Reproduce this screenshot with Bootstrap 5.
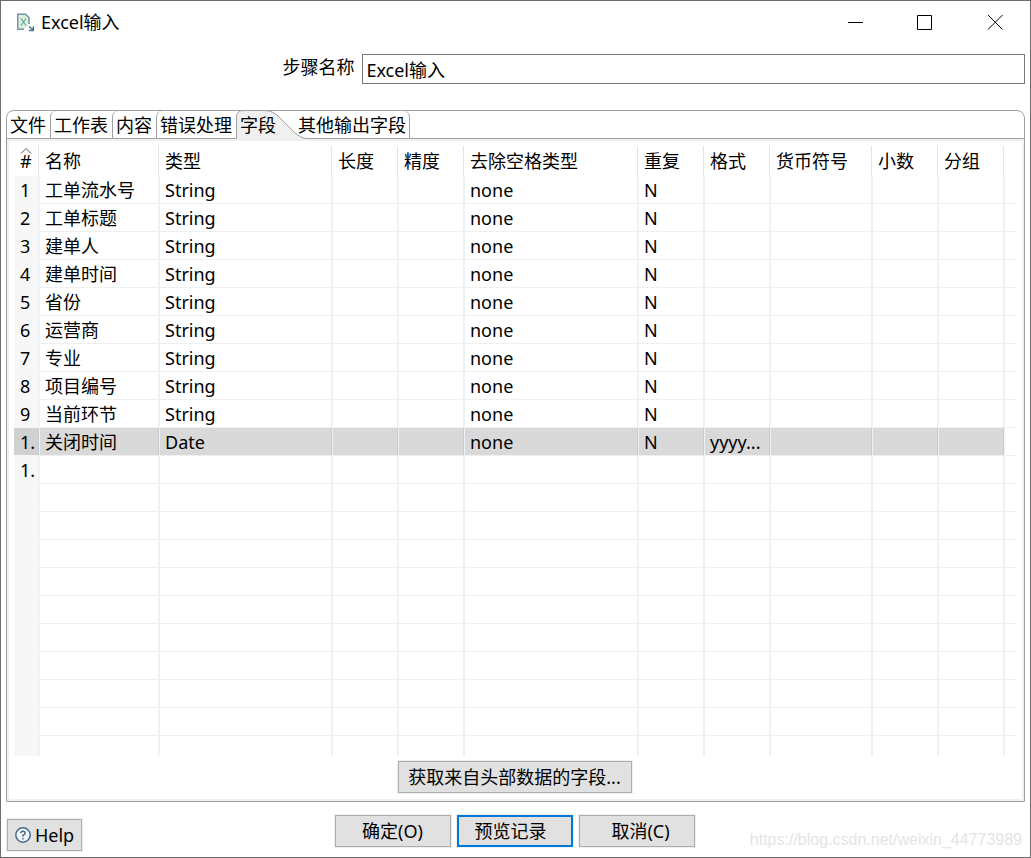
<!DOCTYPE html>
<html lang="zh-CN">
<head>
<meta charset="utf-8">
<meta name="viewport" content="width=device-width, initial-scale=1">
<title>Excel输入</title>
<link rel="stylesheet" href="https://cdn.jsdelivr.net/npm/bootstrap@5.3.0/dist/css/bootstrap.min.css">
<style>
body { font: 18px/28px "Noto Sans", "Noto Sans CJK SC", sans-serif; color: #000; background: #fff; }
.dialog { min-height: 100vh; border: 1px solid #6d6d6d; }
.titlebar { height: 42px; padding-left: 14px; }
.win-btn { width: 70px; height: 42px; border: 0; background: none; padding: 0; }
.step-row { gap: 8px; padding: 11px 5px 0 0; margin-bottom: 26px; }
.step-label { width: calc(35% - 5px); line-height: 26px; }
.step-input { height: 30px; border: 1px solid #7a7a7a; padding: 0 3px; color: #000; font-size: 18px; line-height: 26px; }
.pane { margin: 0 5px; border: 1px solid #a0a0a0; border-radius: 8px 8px 0 0; }
.tabs { height: 28px; border-bottom: 1px solid #a0a0a0; }
.tab-btn { height: 27px; line-height: 25px; border: 0; background: none; padding: 2px 4px 0 3px; color: #000; white-space: nowrap; }
.tab-btn + .tab-btn { border-left: 1px solid #a0a0a0; border-top-left-radius: 6px; }
.tab-btn + .tab-btn.tab-active { border-left: 0; width: 60px; text-align: left; padding-left: 4px; }
.tab-btn + .tab-btn.tab-last { border-left: 0; border-right: 1px solid #a0a0a0; border-radius: 0 6px 0 0; padding: 2px 3px 0 2px; }
.tab-shape { left: 0; top: -1px; pointer-events: none; }
.pane-body { border: 2px solid #f0f0f0; padding: 5px 5px 6px; }
.grid-table { table-layout: fixed; width: 100%; border-collapse: separate; border-spacing: 0; }
.grid-table th, .grid-table td { height: 28px; line-height: 27px; padding: 0 0 0 5px; white-space: nowrap; overflow: hidden; border: 0 solid #edf1f8; border-right-width: 2px; }
.grid-table th { height: 30px; line-height: 30px; font-weight: 400; border-right: 1px solid #fff; box-shadow: inset -1px 0 #e5e5e5; }
.grid-table td { border-bottom: 1px solid #efefef; line-height: 25px; padding-top: 2px; }
.grid-table td:first-child { background: #f7f7f7; border-bottom-color: #f7f7f7; padding-left: 6px; }
.grid-table th:first-child { padding-left: 6px; }
.grid-table th:last-child, .grid-table td:last-child { border-right: 0; box-shadow: none; }
.grid-table tr.picked td:not(:last-child) { background: #d9d9d9; border-right-width: 1px; box-shadow: inset -1px 0 #c5cad3; }
.grid-table tr.picked td:first-child { background: #d1d1d1; }
.grid-table tr.stub td { height: 20px; border-bottom: 0; }
.sort-mark { left: 6px; top: 2px; }
.fetch-row { padding: 5px 2px 0 0; }
.push { height: 32px; line-height: 26px; padding: 0; border: 1px solid #adadad; background: #e1e1e1; color: #000; box-shadow: 0 0 0 1px #f0f0f0; }
.push-wide { width: 234px; }
.push-mid { width: 116px; }
.push-help { width: 75px; }
.push-default { border: 2px solid #0078d7; }
.actions { display: grid; grid-template-columns: 1fr auto 1fr; padding: 13px 8px 5px 6px; }
.actions-mid { gap: 6px; }
.watermark { font: 16px/22px "Liberation Sans", sans-serif; color: #e4e4e4; padding-top: 14px; }
</style>
</head>
<body>
<main class="dialog d-flex flex-column">
  <header class="titlebar d-flex align-items-center">
    <svg class="me-1" width="22" height="20" viewBox="0 0 22 20" fill="none" aria-hidden="true">
      <path d="M9 17.250H2.750V2.250H10.500L14 5.500V12" fill="#dcefdc" stroke="#7292a8" stroke-width="1.500"/>
      <path d="M6 6.500l5 7M11 6.500l-5 7" stroke="#6b9fa0" stroke-width="1.200"/>
      <path d="M14 14.500l4 3.500M18.250 14.500v4h-4.500" stroke="#4b7593" stroke-width="1.500"/>
    </svg>
    <span class="flex-grow-1">Excel输入</span>
    <button class="win-btn d-flex align-items-center justify-content-center" type="button" aria-label="最小化"><svg width="16" height="16" viewBox="0 0 16 16"><path d="M1 8.500h15" stroke="#000"/></svg></button>
    <button class="win-btn d-flex align-items-center justify-content-center" type="button" aria-label="最大化"><svg width="16" height="16" viewBox="0 0 16 16"><path d="M.5 1.500h14v14H.5z" fill="none" stroke="#000"/></svg></button>
    <button class="win-btn d-flex align-items-center justify-content-center" type="button" aria-label="关闭"><svg width="16" height="16" viewBox="0 0 16 16"><path d="M1 1l14.500 14.500M15.500 1l-14.500 14.500" stroke="#000"/></svg></button>
  </header>

  <div class="step-row d-flex">
    <label class="step-label text-end flex-shrink-0" for="step">步骤名称</label>
    <input class="step-input form-control rounded-0" id="step" type="text" value="Excel输入">
  </div>

  <section class="pane">
    <div class="tabs d-flex" role="tablist">
      <button class="tab-btn" type="button" role="tab">文件</button>
      <button class="tab-btn" type="button" role="tab">工作表</button>
      <button class="tab-btn" type="button" role="tab">内容</button>
      <button class="tab-btn" type="button" role="tab">错误处理</button>
      <button class="tab-btn tab-active position-relative" type="button" role="tab" aria-selected="true">
        <svg class="tab-shape position-absolute" width="72" height="31" viewBox="0 0 72 31" aria-hidden="true">
          <path d="M.5 31V6Q1.500.5 7 .5H28Q37 .5 43 7L58 22Q65 28.500 71 28.500V31z" fill="#f0f0f0"/>
          <path d="M.5 29V6Q1.500.5 7 .5H28Q37 .5 43 7L58 22Q65 28.500 71 28.500" fill="none" stroke="#a0a0a0"/>
        </svg>
        <span class="position-relative">字段</span>
      </button>
      <button class="tab-btn tab-last position-relative" type="button" role="tab">其他输出字段</button>
    </div>
    <div class="pane-body">
      <table class="grid-table">
        <colgroup>
          <col width="26"><col width="120"><col width="173"><col width="66"><col width="66"><col width="174"><col width="66"><col width="66"><col width="102"><col width="66"><col width="66"><col>
        </colgroup>
        <thead>
          <tr>
            <th class="position-relative"><svg class="sort-mark position-absolute" width="12" height="6" viewBox="0 0 12 6" aria-hidden="true"><path d="M1 5.500l5-5 5 5" fill="none" stroke="#555"/></svg>#</th>
            <th>名称</th><th>类型</th><th>长度</th><th>精度</th><th>去除空格类型</th><th>重复</th><th>格式</th><th>货币符号</th><th>小数</th><th>分组</th><th></th>
          </tr>
        </thead>
        <tbody id="rows"></tbody>
      </table>
      <div class="fetch-row text-center"><button class="push push-wide" type="button">获取来自头部数据的字段...</button></div>
    </div>
  </section>

  <footer class="actions">
    <div class="mt-1"><button class="push push-help d-flex align-items-center justify-content-center gap-1" type="button">
      <svg width="16" height="16" viewBox="0 0 16 16" fill="none" stroke="#44698a" aria-hidden="true"><circle cx="8" cy="8" r="7.200" fill="#f4f7fa" stroke-width="1.500"/><path d="M5.800 6.300Q6 4.300 8 4.300t2.200 1.900Q10.200 7.300 8 8.300v1.500M8 11v1.500" stroke-width="1.500"/></svg>Help</button></div>
    <div class="actions-mid d-flex">
      <button class="push push-mid" type="button">确定(O)</button>
      <button class="push push-mid push-default pe-2" type="button">预览记录</button>
      <button class="push push-mid ps-2" type="button">取消(C)</button>
    </div>
    <div class="watermark text-end text-nowrap">https://blog.csdn.net/weixin_44773989</div>
  </footer>
</main>
<script src="https://cdn.jsdelivr.net/npm/bootstrap@5.3.0/dist/js/bootstrap.bundle.min.js"></script>
<script>
const fields = [
  ['工单流水号', 'String'], ['工单标题', 'String'], ['建单人', 'String'], ['建单时间', 'String'],
  ['省份', 'String'], ['运营商', 'String'], ['专业', 'String'], ['项目编号', 'String'],
  ['当前环节', 'String'], ['关闭时间', 'Date', 'yyyy...']
];
const body = document.getElementById('rows');
for (let i = 0; i < 21; i++) {
  const tr = body.insertRow();
  const f = fields[i];
  const num = i < 9 ? i + 1 : i < 11 ? '1.' : '';
  const cells = f ? [num, f[0], f[1], '', '', 'none', 'N', f[2] || '', '', '', '', ''] : [num, ...Array(11).fill('')];
  cells.forEach(text => { tr.insertCell().textContent = text; });
  if (i === 9) tr.className = 'picked';
  if (i === 20) tr.className = 'stub';
}
</script>
</body>
</html>
